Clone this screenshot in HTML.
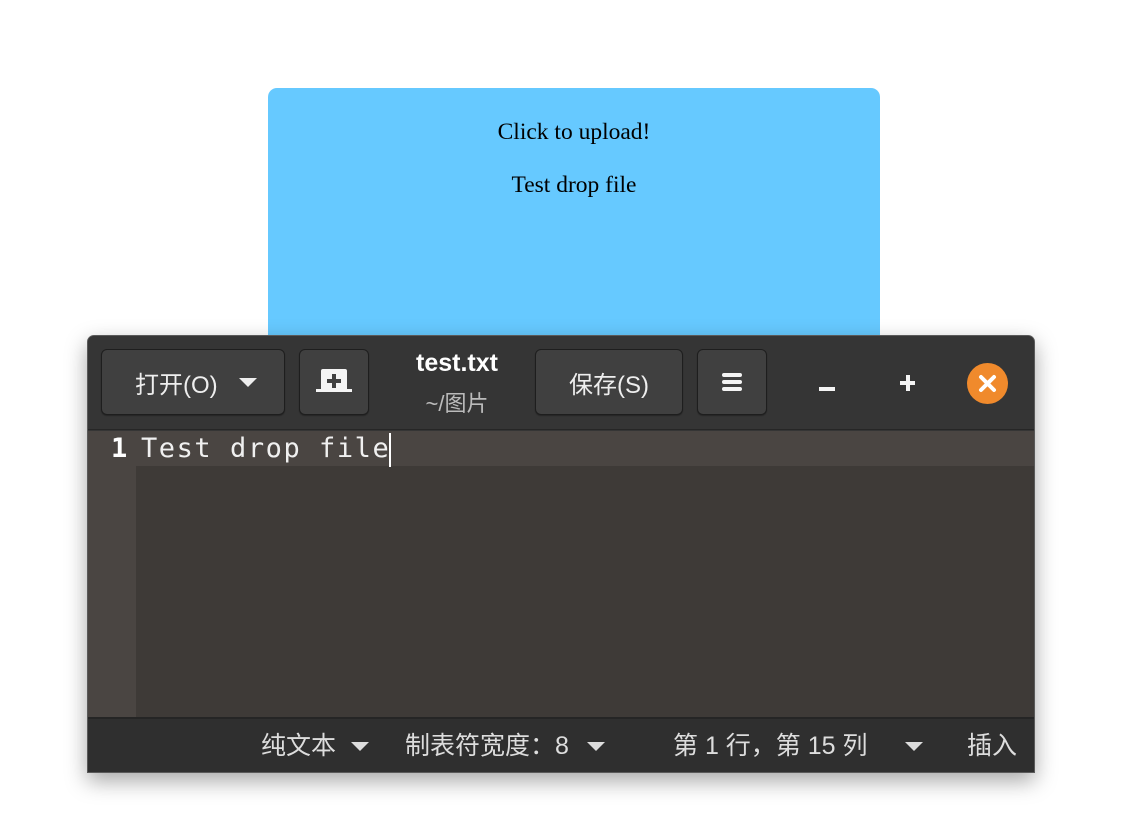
<!DOCTYPE html>
<html><head><meta charset="utf-8"><style>
*{margin:0;padding:0;box-sizing:border-box}
body{width:1138px;height:824px;background:#fff;position:relative;overflow:hidden;font-family:"Liberation Sans","Noto Sans CJK SC",sans-serif}
.drop{position:absolute;left:268px;top:88px;width:612px;height:260px;background:#66c9ff;border-radius:9px;font-family:"Liberation Serif",serif;font-size:23.5px;color:#000;text-align:center}
.win{position:absolute;left:87px;top:335px;width:948px;height:438px;background:#353535;border:1px solid #5a5a5a;border-radius:7px 7px 0 0;box-shadow:0 8px 22px rgba(0,0,0,.35);overflow:hidden}
.btn{position:absolute;top:13px;height:66px;background:#404040;border:1px solid #1e1e1e;border-radius:6px;color:#eee;font-size:24px;display:flex;align-items:center;justify-content:center;box-shadow:0 1px 1px rgba(0,0,0,.3)}
.abs{position:absolute}
.tri{width:0;height:0;border-left:9px solid transparent;border-right:9px solid transparent;border-top:9px solid #eee}
.stri{width:0;height:0;border-left:9px solid transparent;border-right:9px solid transparent;border-top:9px solid #ddd}
.st{position:absolute;top:392px;color:#ddd;font-size:25px;line-height:36px}
</style></head><body>
<div class="drop"><div style="position:absolute;top:31px;width:100%">Click to upload!</div><div style="position:absolute;top:84px;width:100%">Test drop file</div></div>
<div class="win">
 <div class="abs" style="left:0;top:0;width:948px;height:94px;background:#353535;border-bottom:1px solid #262626"></div>
 <div class="btn" style="left:13px;width:184px;justify-content:flex-start;padding-left:33px">打开(O)<div class="tri" style="margin-left:21px"></div></div>
 <div class="btn" style="left:211px;width:70px">
  <svg width="36" height="26" viewBox="0 0 36 26"><path d="M5 2Q5 0 7 0H29Q31 0 31 2V20H36V23H0V20H5Z" fill="#f4f4f4"/><path d="M16 5H20V10H25V14H20V19H16V14H11V10H16Z" fill="#404040"/></svg>
 </div>
 <div class="abs" style="left:300px;top:13px;width:138px;text-align:center;color:#fff;font-weight:bold;font-size:25px">test.txt</div>
 <div class="abs" style="left:300px;top:50px;width:138px;text-align:center;color:#bbb;font-size:22px">~/图片</div>
 <div class="btn" style="left:447px;width:148px">保存(S)</div>
 <div class="btn" style="left:609px;width:70px">
  <svg width="20" height="18" viewBox="0 0 20 18"><g stroke="#f4f4f4" stroke-width="4" stroke-linecap="round"><path d="M2 2H18M2 9H18M2 16H18"/></g></svg>
 </div>
 <div class="abs" style="left:731px;top:51px;width:16px;height:4px;background:#f4f4f4"></div>
 <div class="abs" style="left:812px;top:45px;width:15px;height:4px;background:#f4f4f4"></div>
 <div class="abs" style="left:818px;top:39px;width:4px;height:16px;background:#f4f4f4"></div>
 <div class="abs" style="left:879px;top:27px;width:41px;height:41px;border-radius:50%;background:#f08a2c">
  <svg width="41" height="41" viewBox="0 0 41 41"><path d="M14 14L27 27M27 14L14 27" stroke="#fff" stroke-width="4" stroke-linecap="round"/></svg>
 </div>
 <div class="abs" style="left:0;top:95px;width:948px;height:286px;background:#3e3a37"></div>
 <div class="abs" style="left:0;top:95px;width:48px;height:286px;background:#4a4542"></div>
 <div class="abs" style="left:48px;top:95px;width:900px;height:35px;background:#4a4542"></div>
 <div class="abs" style="left:23px;top:97px;color:#fff;font-weight:bold;font-family:'DejaVu Sans Mono',monospace;font-size:27px;line-height:32px">1</div>
 <div class="abs" style="left:53px;top:97px;color:#f0f0f0;font-family:'DejaVu Sans Mono','Liberation Mono',monospace;font-size:27px;letter-spacing:1.55px;line-height:32px">Test drop file<span style="display:inline-block;width:2px;height:34px;background:#fff;vertical-align:top;margin-left:-1px"></span></div>
 <div class="abs" style="left:0;top:381px;width:948px;height:2px;background:#252525"></div>
 <div class="abs" style="left:0;top:383px;width:948px;height:55px;background:#2f2f2f"></div>
 <div class="st" style="left:173px">纯文本</div><div class="abs stri" style="left:263px;top:406px"></div>
 <div class="st" style="left:317px">制表符宽度：8</div><div class="abs stri" style="left:499px;top:406px"></div>
 <div class="st" style="left:585px">第 1 行，第 15 列</div><div class="abs stri" style="left:817px;top:406px"></div>
 <div class="st" style="left:879px">插入</div>
</div>
</body></html>
